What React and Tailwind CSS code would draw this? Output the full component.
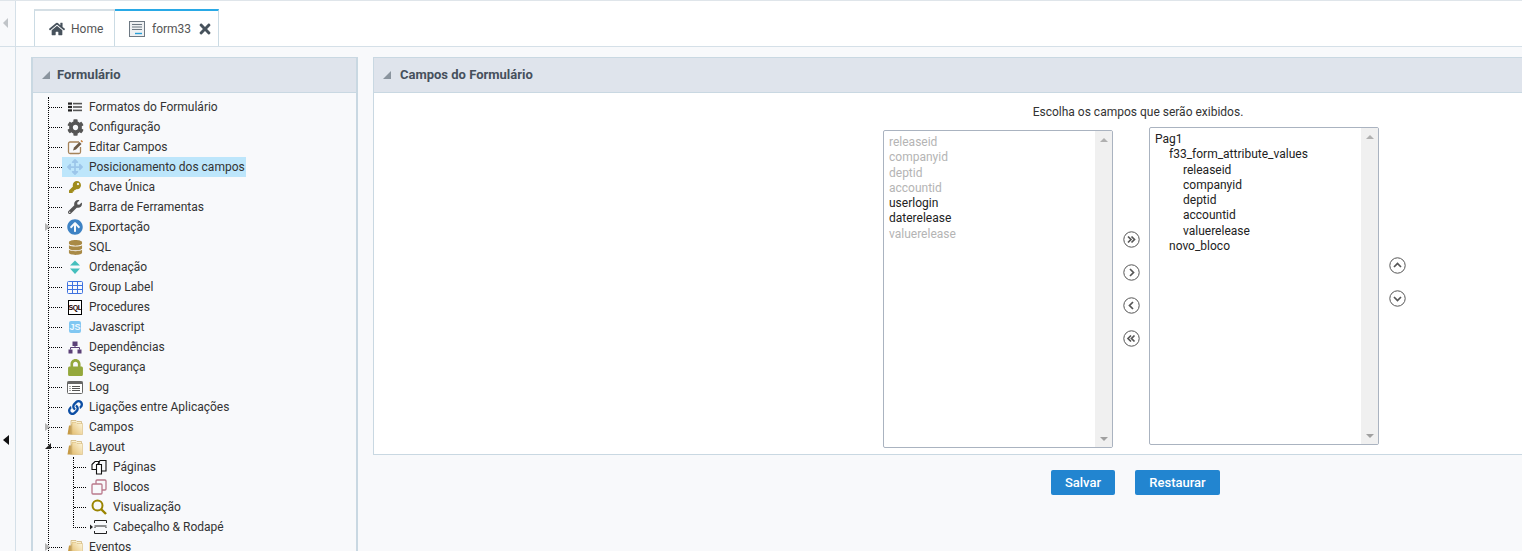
import { FaHome, FaTimes, FaCog, FaArrowsAlt, FaKey, FaWrench, FaArrowCircleUp, FaDatabase, FaLock, FaLink } from 'react-icons/fa'

const FormatsIcon = () => (
    <svg width="16" height="16" viewBox="0 0 16 16" fill="#222">
        <rect x="1" y="3.500" width="4" height="2.200" />
        <rect x="1" y="6.900" width="4" height="2.200" />
        <rect x="1" y="10.300" width="4" height="2.200" />
        <rect x="6" y="3.800" width="9" height="1.600" fill="#555" />
        <rect x="6" y="7.200" width="9" height="1.600" fill="#555" />
        <rect x="6" y="10.600" width="9" height="1.600" fill="#555" />
    </svg>
)

const EditIcon = () => (
    <svg width="17" height="16" viewBox="0 0 17 16" fill="none">
        <path d="M12 3H3A1.500 1.500 0 0 0 1.500 4.500v8.500A1.500 1.500 0 0 0 3 14.500h9A1.500 1.500 0 0 0 13.500 13V8" stroke="#a5835a" strokeWidth="1.300" />
        <path d="M6 11.500l1-3 5.500-5.500 2 2L9 10.500z" fill="#6b5a48" />
        <path d="M13.500 2l1-1 1.500 1.500-1 1z" fill="#c77a2e" />
    </svg>
)

const SortIcon = () => (
    <svg width="16" height="16" viewBox="0 0 16 16" fill="#45bfbd">
        <path d="M8 1.500l5 5H3z" />
        <path d="M8 15l5-5.500H3z" />
    </svg>
)

const TableIcon = () => (
    <svg width="16" height="13" viewBox="0 0 16 13" fill="none" stroke="#3f73e0" strokeWidth="1">
        <rect x="0.500" y="0.500" width="15" height="12" rx="1" />
        <path d="M0.500 4.500h15M0.500 8.500h15M5.500 0.500v12M10.500 0.500v12" />
    </svg>
)

const SqlIcon = () => (
    <div className="flex h-[15px] w-[14px] items-center justify-center border border-black bg-white font-['Liberation_Sans',sans-serif] text-[7px] font-bold leading-none tracking-[-0.4px] text-[#200]">
        SQL
    </div>
)

const JsIcon = () => (
    <div className="flex h-[12px] w-[12px] items-center justify-center rounded-[2px] bg-[#80c7f2] font-['Liberation_Sans',sans-serif] text-[9px] font-bold leading-none text-[#eef8ff]">
        JS
    </div>
)

const TreeChartIcon = () => (
    <svg width="14" height="13" viewBox="0 0 14 13" fill="#5b4177">
        <rect x="4.500" y="0.500" width="5" height="4.500" />
        <rect x="0.500" y="8.500" width="4" height="4" />
        <rect x="9.500" y="8.500" width="4" height="4" />
        <path d="M2.500 8.500v-2h9v2M7 5v1.500" fill="none" stroke="#5b4177" />
    </svg>
)

const LogIcon = () => (
    <svg width="16" height="13" viewBox="0 0 16 13" fill="none">
        <rect x="0.500" y="0.500" width="15" height="12" rx="1" fill="#fff" stroke="#666" />
        <rect x="0.500" y="0.500" width="15" height="2.500" fill="#666" />
        <path d="M2.500 5.500h1M5 5.500h8M2.500 7.500h1M5 7.500h8M2.500 9.500h1M5 9.500h8" stroke="#555" />
    </svg>
)

const FolderIcon = () => (
    <svg width="16" height="16" viewBox="0 0 16 16">
        <defs>
            <linearGradient id="folderFill" x1="1" y1="0" x2="0" y2="1">
                <stop offset="0" stopColor="#fef8e0" />
                <stop offset="1" stopColor="#e3bd70" />
            </linearGradient>
        </defs>
        <path d="M0.500 15.500l1.500-9h3V15.500z" fill="#c69a45" />
        <path d="M4 15.500V1.500h5l1 1h4.500v3h-10z" fill="#fbf0cf" stroke="#c9ad72" strokeWidth="0.700" />
        <path d="M5 15.500V3.500h4l1 1h5.500v11z" fill="url(#folderFill)" stroke="#d3b06a" strokeWidth="0.500" />
    </svg>
)

const PagesIcon = () => (
    <svg width="16" height="16" viewBox="0 0 16 16" fill="#fff" stroke="#111" strokeWidth="1.100">
        <path d="M1 5.500l3-3h4v8H1z" />
        <path d="M6 6.500l3-5h6v10.500l-0 0H9" fill="none" />
        <path d="M5.500 5.500h5v9.500h-5z" />
    </svg>
)

const BlocksIcon = () => (
    <svg width="16" height="16" viewBox="0 0 16 16" fill="none" stroke="#b9798c" strokeWidth="1.300">
        <rect x="5" y="1" width="10" height="10" rx="1" />
        <rect x="1" y="5" width="10" height="10" rx="1" fill="#f8f9fb" />
    </svg>
)

const SearchIcon = () => (
    <svg width="16" height="16" viewBox="0 0 16 16" fill="none" stroke="#9a8400">
        <circle cx="6.500" cy="6.500" r="5" strokeWidth="2" />
        <path d="M10 10l5 5" strokeWidth="2.400" />
    </svg>
)

const HeaderFooterIcon = () => (
    <svg width="19" height="16" viewBox="0 0 19 16" fill="none" stroke="#222">
        <path d="M0 5.500l3 2.500-3 2.500z" fill="#222" stroke="none" />
        <path d="M4.500 4V1.500h12V4M4.500 12v2.500h12V12M4.500 7h12" />
        <path d="M4.500 8.500h1M15.500 8.500h1" />
    </svg>
)

const FormTabIcon = () => (
    <svg width="16" height="16" viewBox="0 0 16 16" fill="none">
        <rect x="0.500" y="0.500" width="15" height="15" fill="#eef0f2" stroke="#6d7882" />
        <path d="M3 3.500h10M3 6h10M3 8.500h10" stroke="#6d7882" />
        <path d="M6 12.500h7" stroke="#2a9fd8" strokeWidth="1.400" />
    </svg>
)

const RoundArrow = ({ d }) => (
    <svg width="17" height="17" viewBox="0 0 17 17" fill="none" stroke="#555">
        <circle cx="8.500" cy="8.500" r="7.700" strokeWidth="1" />
        <path d={d} strokeWidth="1.700" />
    </svg>
)

const treeItems = [
    { label: 'Formatos do Formulário', icon: <FormatsIcon /> },
    { label: 'Configuração', icon: <FaCog size={17} color="#555" /> },
    { label: 'Editar Campos', icon: <EditIcon /> },
    { label: 'Posicionamento dos campos', icon: <FaArrowsAlt size={16} color="#9cc6ea" />, selected: true },
    { label: 'Chave Única', icon: <FaKey size={12} color="#a08c1c" /> },
    { label: 'Barra de Ferramentas', icon: <FaWrench size={14} color="#555" /> },
    { label: 'Exportação', icon: <FaArrowCircleUp size={16} color="#3d82c4" />, expand: true },
    { label: 'SQL', icon: <FaDatabase size={15} color="#a98a46" /> },
    { label: 'Ordenação', icon: <SortIcon /> },
    { label: 'Group Label', icon: <TableIcon /> },
    { label: 'Procedures', icon: <SqlIcon /> },
    { label: 'Javascript', icon: <JsIcon /> },
    { label: 'Dependências', icon: <TreeChartIcon /> },
    { label: 'Segurança', icon: <FaLock size={17} color="#94a83c" /> },
    { label: 'Log', icon: <LogIcon /> },
    { label: 'Ligações entre Aplicações', icon: <FaLink size={15} color="#0c4ea4" /> },
    { label: 'Campos', icon: <FolderIcon />, expand: true },
    { label: 'Layout', icon: <FolderIcon />, open: true },
]

const layoutItems = [
    { label: 'Páginas', icon: <PagesIcon /> },
    { label: 'Blocos', icon: <BlocksIcon /> },
    { label: 'Visualização', icon: <SearchIcon /> },
    { label: 'Cabeçalho & Rodapé', icon: <HeaderFooterIcon />, last: true },
]

const TreeRow = ({ item }) => (
    <div className="relative flex h-5 items-center">
        <div className="h-0 w-[13px] border-b border-dotted border-black" />
        {item.expand && (
            <span className="absolute left-[-4px] top-[6px] h-0 w-0 border-y-[4px] border-l-[5px] border-y-transparent border-l-[#b5b5b5]" />
        )}
        {item.open && (
            <span className="absolute left-[-4px] top-[6px] h-0 w-0 border-b-[6px] border-l-[6px] border-b-[#222] border-l-transparent" />
        )}
        <div className={`flex h-5 items-center ${item.selected ? 'w-[184px] bg-[#bde6fb]' : ''}`}>
            <div className="flex w-[27px] shrink-0 items-center justify-center pr-[1px]">{item.icon}</div>
            <span className="whitespace-nowrap">{item.label}</span>
        </div>
    </div>
)

const ChildRow = ({ item }) => (
    <div className="flex h-5 items-start">
        <div className={`h-full w-[13px] shrink-0 ${item.last ? '' : 'border-l border-dotted border-black'}`}>
            <div className={`h-[11px] ${item.last ? 'border-l' : ''} border-b border-dotted border-black`} />
        </div>
        <div className="flex h-5 w-[27px] shrink-0 items-center justify-center pr-[1px]">{item.icon}</div>
        <span className="leading-5">{item.label}</span>
    </div>
)

const Scrollbar = () => (
    <div className="flex w-[17px] shrink-0 flex-col items-center justify-between bg-[#f0f0f0] pb-[6px] pt-[7px]">
        <span className="h-0 w-0 border-x-[4px] border-b-[4px] border-x-transparent border-b-[#b0b0b0]" />
        <span className="h-0 w-0 border-x-[4px] border-t-[4px] border-x-transparent border-t-[#a0a0a0]" />
    </div>
)

const ListBox = ({ children, className }) => (
    <div className={`flex h-[318px] w-[230px] shrink-0 overflow-hidden rounded-[2px] border border-[#aab3c0] bg-white ${className}`}>
        <div className="flex-1 pl-[5px] pt-[4px] leading-[15.3px] text-[#222]">{children}</div>
        <Scrollbar />
    </div>
)

const App = () => {
    return (
        <div className="flex h-[551px] w-[1522px] flex-col overflow-hidden bg-[#f8f9fb] font-['Roboto',sans-serif] text-[12px] text-[#333]">
            <div className="flex h-[47px] shrink-0 border-y border-[#dfe5ea] border-b-[#d5e0e8] bg-white">
                <div className="flex w-4 shrink-0 items-center border-r border-[#d5e0e8] bg-[#f8f9fb] pb-[2px] pl-[3px]">
                    <span className="h-0 w-0 border-y-[5px] border-r-[5px] border-y-transparent border-r-[#c0c4c8]" />
                </div>
                <div className="flex items-end pl-[18px]">
                    <div className="flex h-[37px] w-[81px] items-center gap-[6px] border-x border-t-[2px] border-[#cbdbe4] border-t-[#d5dfe5] pl-[14px] text-[#555]">
                        <FaHome size={16} color="#47525c" />
                        <span>Home</span>
                    </div>
                    <div className="flex h-[37px] w-[104px] items-center border-r border-t-[2px] border-[#cbdbe4] border-t-[#29a9e6] pl-[14px] text-[#555]">
                        <FormTabIcon />
                        <span className="ml-[7px]">form33</span>
                        <FaTimes size={16} color="#47525c" className="ml-[6px]" />
                    </div>
                </div>
            </div>

            <div className="flex min-h-0 flex-1">
                <div className="flex w-4 shrink-0 items-start border-r border-[#d5e0e8] pl-[3px] pt-[388px]">
                    <span className="h-0 w-0 border-y-[5px] border-r-[6px] border-y-transparent border-r-[#111]" />
                </div>

                <div className="flex min-w-0 flex-1 items-start gap-[15px] pl-[15px] pt-[10px]">
                    <div className="w-[327px] shrink-0 border-x-2 border-t border-[#c9d8e2]">
                        <div className="flex h-[35px] items-center gap-[7px] border-b border-[#c9d8e2] bg-[#dfe4ec] pl-[9px] text-[13px] font-bold text-[#46505c]">
                            <span className="h-0 w-0 border-b-[8px] border-l-[8px] border-b-[#8a949e] border-l-transparent" />
                            <span>Formulário</span>
                        </div>
                        <div className="ml-[15px] mt-[4px] h-[480px] border-l border-dotted border-black">
                            {treeItems.map((item) => (
                                <TreeRow key={item.label} item={item} />
                            ))}
                            <div className="ml-[24px]">
                                {layoutItems.map((item) => (
                                    <ChildRow key={item.label} item={item} />
                                ))}
                            </div>
                            <TreeRow item={{ label: 'Eventos', icon: <FolderIcon />, expand: true }} />
                        </div>
                    </div>

                    <div className="min-w-0 flex-1">
                        <div className="border-y border-l border-[#c9d8e2]">
                            <div className="flex h-[35px] items-center gap-[9px] border-b border-[#c9d8e2] bg-[#dfe4ec] pl-[9px] text-[13px] font-bold text-[#46505c]">
                                <span className="h-0 w-0 border-b-[8px] border-l-[8px] border-b-[#8a949e] border-l-transparent" />
                                <span>Campos do Formulário</span>
                            </div>
                            <div className="h-[361px] bg-white pl-[509px]">
                                <div className="w-[510px] pt-[12px] text-center leading-[14px] text-[#333]">
                                    Escolha os campos que serão exibidos.
                                </div>
                                <div className="mt-[8px] flex items-start">
                                    <ListBox className="mt-[3px]">
                                        <div className="text-[#b4b4b4]">releaseid</div>
                                        <div className="text-[#b4b4b4]">companyid</div>
                                        <div className="text-[#b4b4b4]">deptid</div>
                                        <div className="text-[#b4b4b4]">accountid</div>
                                        <div>userlogin</div>
                                        <div>daterelease</div>
                                        <div className="text-[#b4b4b4]">valuerelease</div>
                                    </ListBox>
                                    <div className="flex w-[36px] shrink-0 flex-col items-center gap-4 pt-[104px]">
                                        <RoundArrow d="M5 5.500l3 3-3 3M8.500 5.500l3 3-3 3" />
                                        <RoundArrow d="M7 5l3.500 3.500L7 12" />
                                        <RoundArrow d="M10 5L6.500 8.500 10 12" />
                                        <RoundArrow d="M8 5.500l-3 3 3 3M11.500 5.500l-3 3 3 3" />
                                    </div>
                                    <ListBox>
                                        <div>Pag1</div>
                                        <div className="pl-[14px]">f33_form_attribute_values</div>
                                        <div className="pl-[28px]">releaseid</div>
                                        <div className="pl-[28px]">companyid</div>
                                        <div className="pl-[28px]">deptid</div>
                                        <div className="pl-[28px]">accountid</div>
                                        <div className="pl-[28px]">valuerelease</div>
                                        <div className="pl-[14px]">novo_bloco</div>
                                    </ListBox>
                                    <div className="flex w-[37px] shrink-0 flex-col items-center gap-4 pt-[130px]">
                                        <RoundArrow d="M5 10l3.500-3.500L12 10" />
                                        <RoundArrow d="M5 7l3.500 3.500L12 7" />
                                    </div>
                                </div>
                            </div>
                        </div>
                        <div className="mt-[15px] flex gap-5 pl-[678px]">
                            <button type="button" className="h-[25px] w-[64px] rounded-[2px] bg-[#2285d0] text-[13px] font-medium text-white">Salvar</button>
                            <button type="button" className="h-[25px] w-[85px] rounded-[2px] bg-[#2285d0] text-[13px] font-medium text-white">Restaurar</button>
                        </div>
                    </div>
                </div>
            </div>
        </div>
    )
}

export default App
